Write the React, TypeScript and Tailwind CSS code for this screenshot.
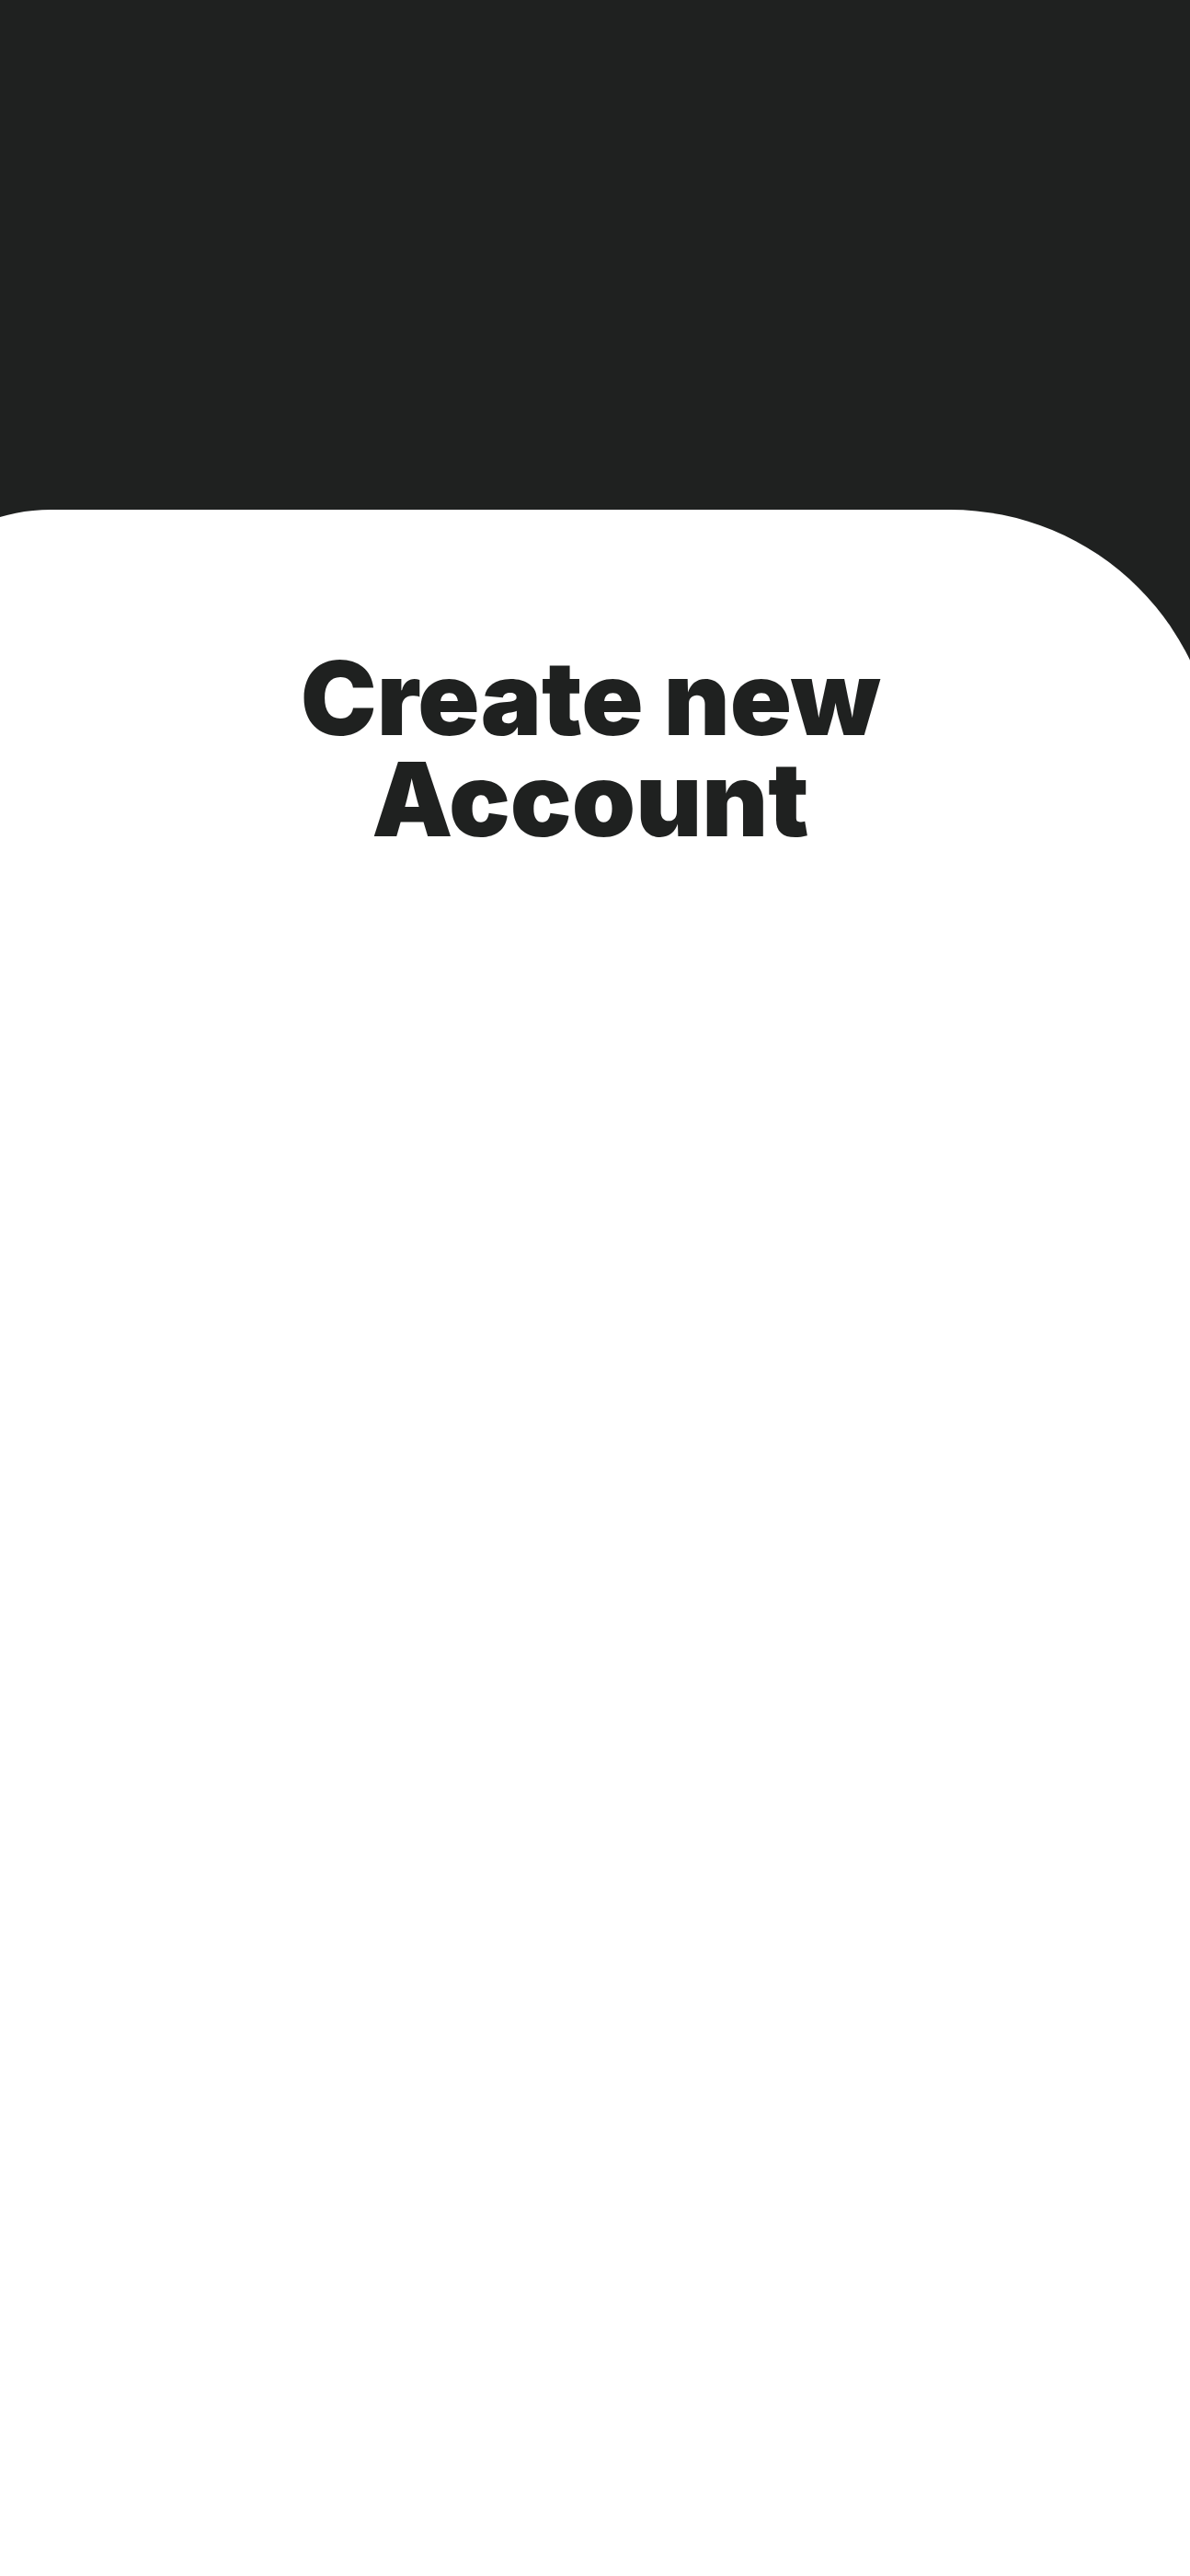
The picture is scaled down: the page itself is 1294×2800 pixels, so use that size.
export default function App() {
  return (
    <div className="w-[1294px] min-h-[2800px] bg-[#1f2120] overflow-hidden flex flex-col">
      <div className="h-[554px] shrink-0" />
      <div className="flex-1 ml-[-138px] w-[1461px] bg-white rounded-tl-[193px] rounded-tr-[290px] pl-[138px] pr-[39px] pt-[150px]">
        <h1 className="text-center text-[#1f2120] font-black text-[111px] leading-[110px] tracking-normal font-['Inter','Liberation_Sans',sans-serif]">
          Create new
          <br />
          Account
        </h1>
      </div>
    </div>
  )
}
